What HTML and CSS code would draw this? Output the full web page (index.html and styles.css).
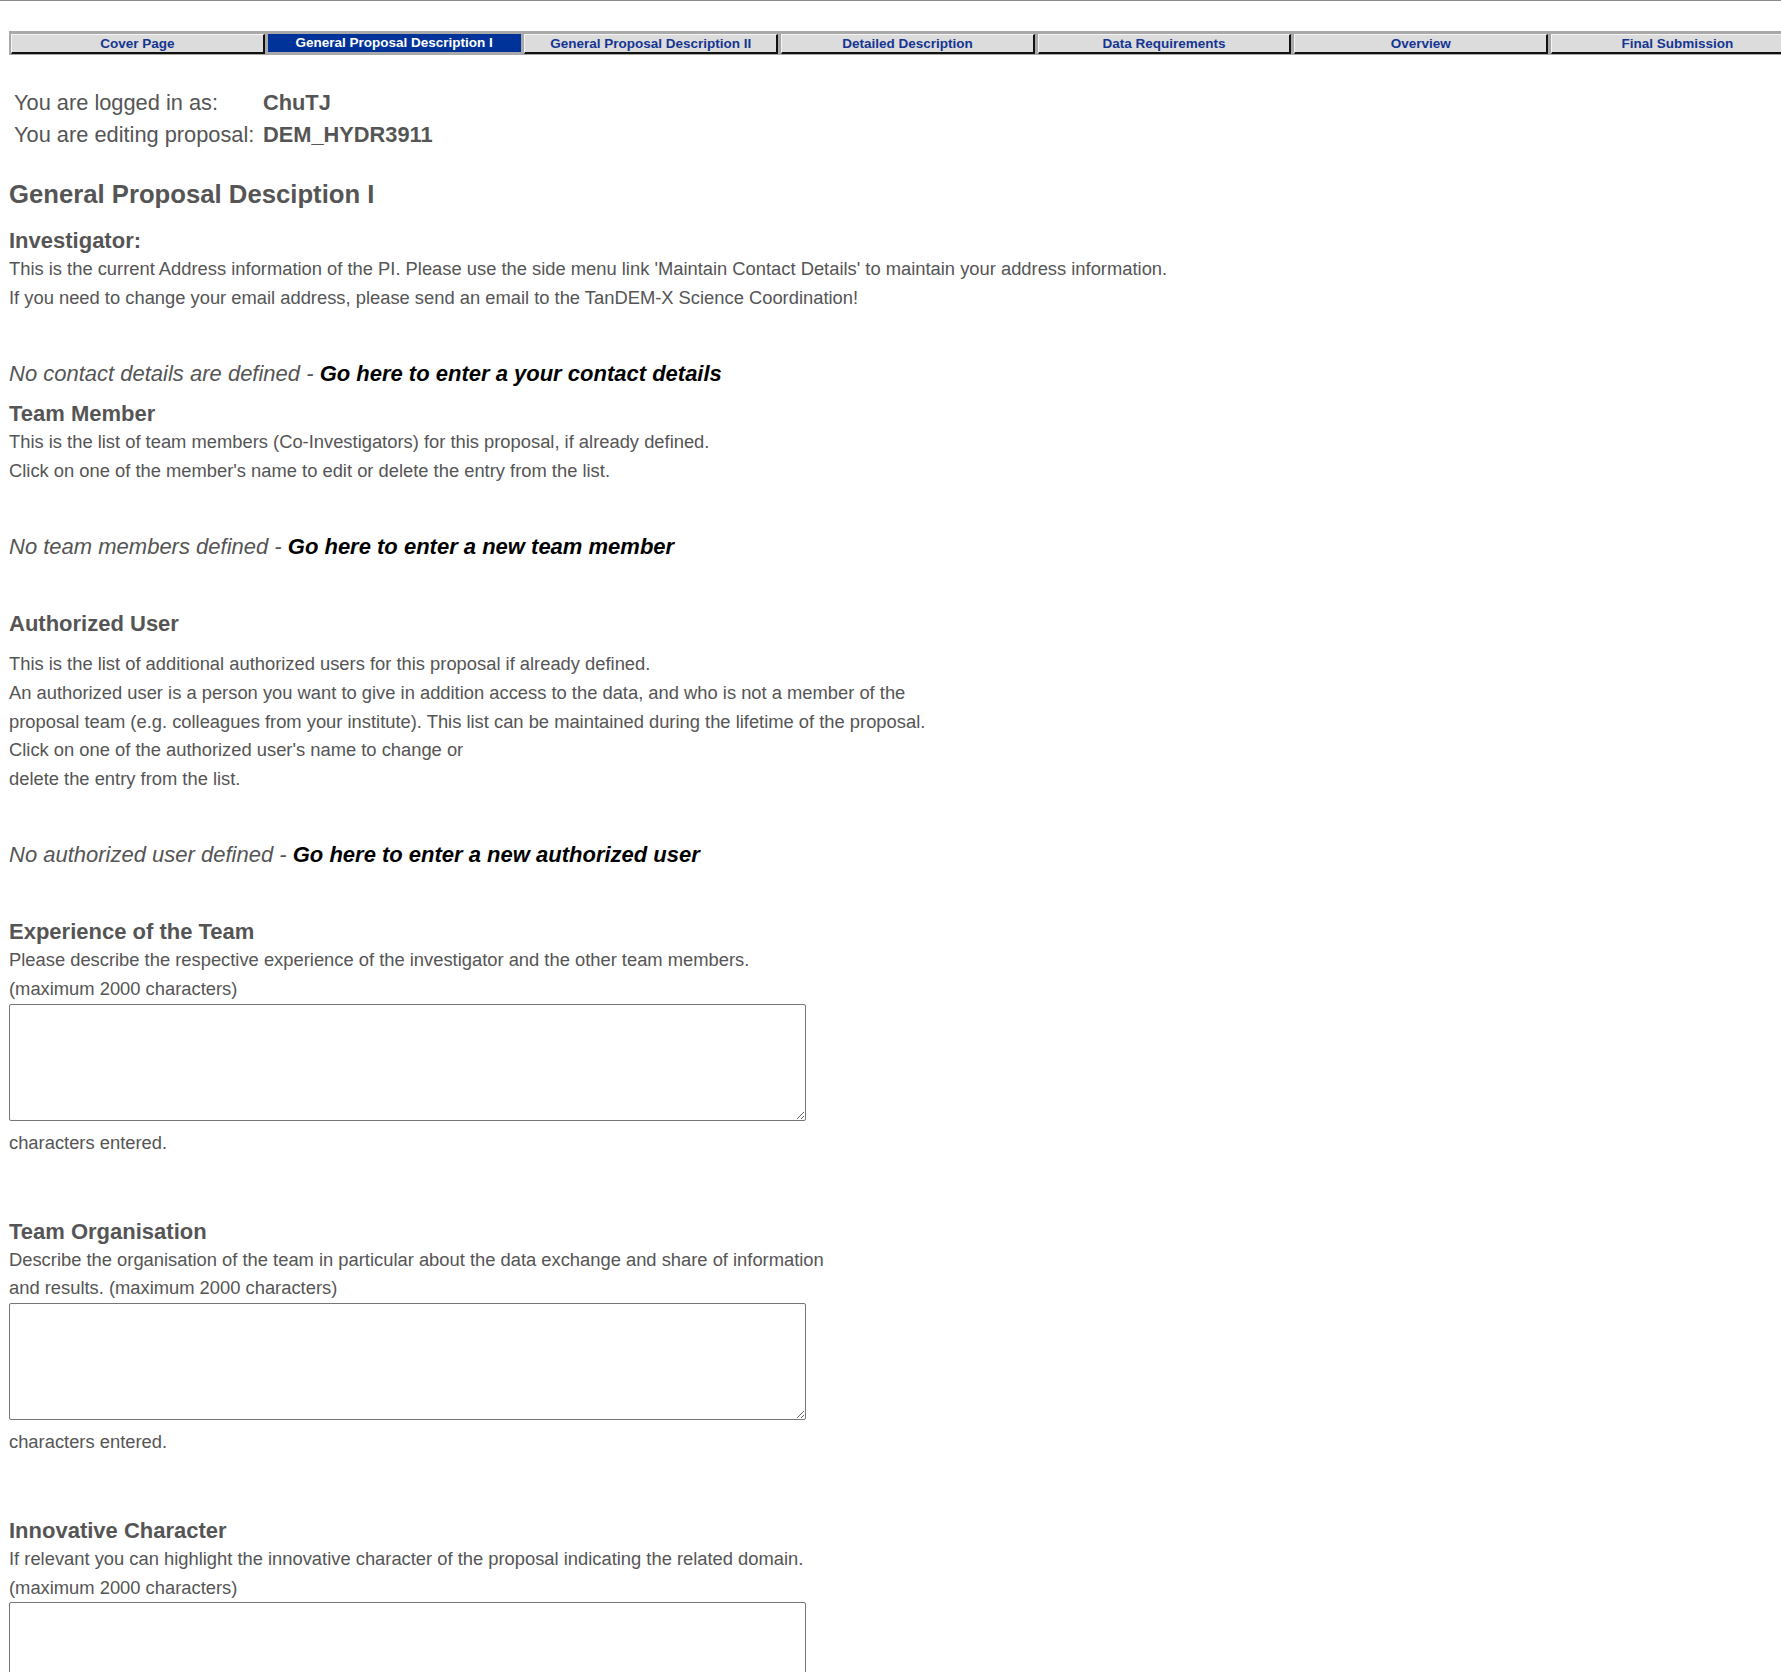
FILE: index.html
```html
<!DOCTYPE html>
<html lang="en">
<head>
<meta charset="utf-8">
<title>General Proposal Desciption I</title>
<link rel="stylesheet" href="styles.css">
</head>
<body>
<div class="topline"></div>
<div class="page">
  <div class="tabwrap">
    <nav class="tabbar">
      <a class="tab">Cover Page</a>
      <a class="tab active">General Proposal Description I</a>
      <a class="tab">General Proposal Description II</a>
      <a class="tab">Detailed Description</a>
      <a class="tab">Data Requirements</a>
      <a class="tab">Overview</a>
      <a class="tab">Final Submission</a>
    </nav>
  </div>

  <div class="login">
    <div class="lbl">You are logged in as:</div><div class="val">ChuTJ</div>
    <div class="lbl">You are editing proposal:</div><div class="val">DEM_HYDR3911</div>
  </div>

  <h1 class="title">General Proposal Desciption I</h1>

  <h2 class="sec sec-first">Investigator:</h2>
  <p class="txt">This is the current Address information of the PI. Please use the side menu link 'Maintain Contact Details' to maintain your address information.<br>If you need to change your email address, please send an email to the TanDEM-X Science Coordination!</p>
  <p class="none">No contact details are defined - <a class="go">Go here to enter a your contact details</a></p>

  <h2 class="sec sec-tight">Team Member</h2>
  <p class="txt">This is the list of team members (Co-Investigators) for this proposal, if already defined.<br>Click on one of the member's name to edit or delete the entry from the list.</p>
  <p class="none">No team members defined - <a class="go">Go here to enter a new team member</a></p>

  <h2 class="sec sec-auth">Authorized User</h2>
  <p class="txt txt-auth">This is the list of additional authorized users for this proposal if already defined.<br>An authorized user is a person you want to give in addition access to the data, and who is not a member of the<br>proposal team (e.g. colleagues from your institute). This list can be maintained during the lifetime of the proposal.<br>Click on one of the authorized user's name to change or<br>delete the entry from the list.</p>
  <p class="none">No authorized user defined - <a class="go">Go here to enter a new authorized user</a></p>

  <h2 class="sec sec-exp">Experience of the Team</h2>
  <p class="txt">Please describe the respective experience of the investigator and the other team members.<br>(maximum 2000 characters)</p>
  <textarea class="box"></textarea>
  <p class="count">characters entered.</p>

  <h2 class="sec sec-form">Team Organisation</h2>
  <p class="txt">Describe the organisation of the team in particular about the data exchange and share of information<br>and results. (maximum 2000 characters)</p>
  <textarea class="box"></textarea>
  <p class="count">characters entered.</p>

  <h2 class="sec sec-form">Innovative Character</h2>
  <p class="txt">If relevant you can highlight the innovative character of the proposal indicating the related domain.<br>(maximum 2000 characters)</p>
  <textarea class="box"></textarea>
</div>
</body>
</html>
```

FILE: styles.css
```css
html {
  overflow: hidden;
}
body {
  margin: 0;
  font-family: "Liberation Sans", Arial, Helvetica, sans-serif;
  color: #555555;
  background: #ffffff;
}
.topline {
  height: 1px;
  background: #8a8a8a;
}
.page {
  padding: 0 9px;
}
.tabwrap {
  margin-top: 30px;
  width: 100%;
}
.tabbar {
  display: flex;
  width: max-content;
  gap: 3px;
  padding: 3px 2px 1px 2px;
  background: #a9a9a9;
}
.tab {
  box-sizing: border-box;
  width: 253.7px;
  height: 20px;
  background: #dcdcdc;
  border-top: 1px solid #f4f4f4;
  border-left: 1px solid #f4f4f4;
  border-right: 2px solid #111111;
  border-bottom: 2px solid #111111;
  color: #143592;
  font-size: 13.5px;
  font-weight: bold;
  line-height: 17px;
  text-align: center;
  text-decoration: none;
  white-space: nowrap;
}
.tab.active {
  height: 18px;
  background: #003399;
  border-color: #003399;
  color: #ffffff;
  line-height: 15px;
}
.login {
  display: grid;
  grid-template-columns: 249px auto;
  margin-top: 32px;
  padding-left: 5px;
  font-size: 21.8px;
  line-height: 32px;
  color: #555555;
}
.login .val {
  font-weight: bold;
}
.title {
  margin: 27px 0 0 0;
  font-size: 25.7px;
  line-height: 32px;
  font-weight: bold;
  color: #555555;
}
.sec {
  margin: 0;
  font-size: 22px;
  line-height: 28px;
  font-weight: bold;
  color: #555555;
}
.sec-first {
  margin-top: 17px;
}
.sec-tight {
  margin-top: 11px;
}
.sec-auth {
  margin-top: 48px;
}
.sec-exp {
  margin-top: 48px;
}
.sec-form {
  margin-top: 60px;
}
.txt {
  margin: 0;
  font-size: 18.35px;
  line-height: 28.6px;
  color: #555555;
}
.txt-auth {
  margin-top: 12px;
}
.none {
  margin: 47px 0 0 0;
  font-size: 22px;
  line-height: 30px;
  font-style: italic;
  color: #555555;
}
.go {
  color: #000000;
  font-weight: bold;
  text-decoration: none;
}
.box {
  display: block;
  box-sizing: border-box;
  width: 797px;
  height: 117px;
  margin: 0;
  border: 1px solid #767676;
  border-radius: 2px;
  font-family: "Liberation Sans", Arial, sans-serif;
}
.count {
  margin: 8.5px 0 0 0;
  font-size: 18.35px;
  line-height: 28.6px;
  color: #555555;
}
```
